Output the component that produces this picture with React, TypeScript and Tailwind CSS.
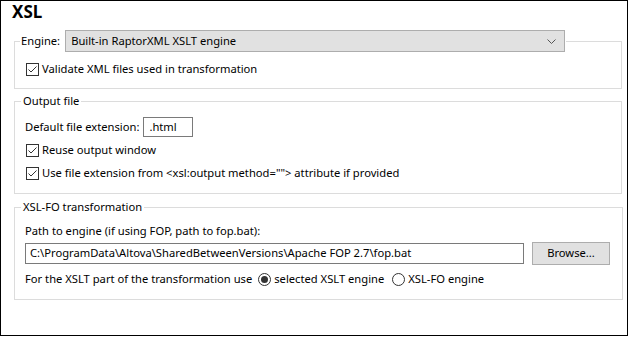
import React from "react";

function Check() {
  return (
    <span className="w-[13px] h-[13px] border border-[#333333] bg-white flex items-center justify-center shrink-0">
      <svg width="11" height="11" viewBox="0 0 11 11">
        <path d="M1.5 5.5 L4 8 L9.5 2.5" fill="none" stroke="#333333" strokeWidth="1" />
      </svg>
    </span>
  );
}

function Radio({ on }: { on?: boolean }) {
  return (
    <span className="w-[13px] h-[13px] rounded-full border border-[#333333] bg-white flex items-center justify-center shrink-0">
      {on && <span className="w-[7px] h-[7px] rounded-full bg-[#333333]" />}
    </span>
  );
}

function CheckRow({ label, className = "" }: { label: string; className?: string }) {
  return (
    <div className={`flex items-center h-[20px] gap-[3px] pl-[1px] ${className}`}>
      <Check />
      <span>{label}</span>
    </div>
  );
}

export default function App() {
  return (
    <div
      className="w-[628px] h-[336px] border border-black bg-white text-[11.2px] leading-[16px] text-black"
      style={{ fontFamily: "'Noto Sans', 'Open Sans', sans-serif" }}
    >
      <div className="pl-[11px] h-[22px] text-[17px] leading-[22px] font-bold">XSL</div>

      <fieldset className="mt-[7px] ml-[13px] w-[608px] border border-[#dcdcdc]">
        <legend className="ml-[5px] px-[1px]">
          <div className="flex items-center h-[22px] gap-[5px]">
            <span>Engine:</span>
            <div className="w-[500px] h-[22px] bg-[#e1e1e1] border border-[#adadad] flex items-center justify-between pl-[5px] pr-[8px]">
              <span>Built-in RaptorXML XSLT engine</span>
              <svg width="9" height="5" viewBox="0 0 9 5">
                <path d="M0.5 0.5 L4.5 4.5 L8.5 0.5" fill="none" stroke="#555555" strokeWidth="1" />
              </svg>
            </div>
          </div>
        </legend>
        <div className="pl-[10px] pr-[12px] pb-[9px]">
          <CheckRow label="Validate XML files used in transformation" className="mt-[7px]" />
        </div>
      </fieldset>

      <fieldset className="mt-[4px] ml-[13px] w-[608px] border border-[#dcdcdc]">
        <legend className="ml-[6px] px-[2px] h-[16px]">Output file</legend>
        <div className="pl-[10px] pr-[12px] pb-[10px]">
          <div className="flex items-center h-[20px] gap-[4px] mt-[8px]">
            <span>Default file extension:</span>
            <div className="w-[50px] h-[20px] border border-[#7a7a7a] flex items-center pl-[5px]">.html</div>
          </div>
          <CheckRow label="Reuse output window" className="mt-[3px]" />
          <CheckRow
            label={'Use file extension from <xsl:output method=""> attribute if provided'}
            className="mt-[3px]"
          />
        </div>
      </fieldset>

      <fieldset className="mt-[5px] ml-[13px] w-[608px] border border-[#dcdcdc]">
        <legend className="ml-[6px] px-[2px] h-[16px]">XSL-FO transformation</legend>
        <div className="pl-[10px] pr-[12px] pb-[10px]">
          <div className="flex items-center h-[20px] mt-[6px]">Path to engine (if using FOP, path to fop.bat):</div>
          <div className="flex items-center gap-[8px] mt-[1px] h-[22px]">
            <div className="w-[499px] h-[21px] border border-[#7a7a7a] flex items-center pl-[4px]">
              C:\ProgramData\Altova\SharedBetweenVersions\Apache FOP 2.7\fop.bat
            </div>
            <div className="w-[78px] h-[23px] bg-[#e1e1e1] border border-[#adadad] flex items-center justify-center">
              Browse...
            </div>
          </div>
          <div className="flex items-center h-[20px] mt-[5px]">
            <span className="mr-[6px]">For the XSLT part of the transformation use</span>
            <Radio on />
            <span className="ml-[3px] mr-[8px]">selected XSLT engine</span>
            <Radio />
            <span className="ml-[3px]">XSL-FO engine</span>
          </div>
        </div>
      </fieldset>
    </div>
  );
}
